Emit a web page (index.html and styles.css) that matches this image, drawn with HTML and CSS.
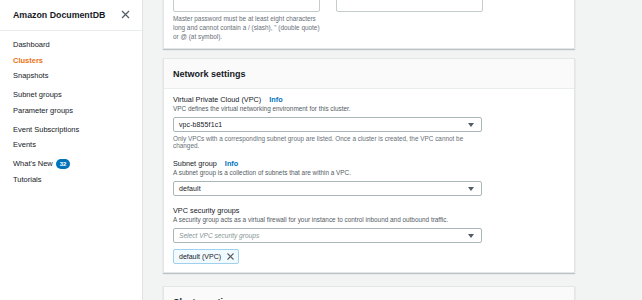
FILE: index.html
```html
<!DOCTYPE html>
<html>
<head>
<meta charset="utf-8">
<link rel="stylesheet" href="styles.css">
</head>
<body>
<div class="app">
  <aside class="sidebar">
    <div class="side-head">
      <span class="side-title">Amazon DocumentDB</span>
      <svg class="close" width="9" height="9" viewBox="0 0 9 9"><path d="M1 1L8 8M8 1L1 8" stroke="#545b64" stroke-width="1.2" fill="none"/></svg>
    </div>
    <nav class="nav">
      <div class="group">
        <div class="item">Dashboard</div>
        <div class="item active">Clusters</div>
        <div class="item">Snapshots</div>
      </div>
      <div class="group">
        <div class="item">Subnet groups</div>
        <div class="item">Parameter groups</div>
      </div>
      <div class="group">
        <div class="item">Event Subscriptions</div>
        <div class="item">Events</div>
      </div>
      <div class="group">
        <div class="item">What's New <span class="badge">32</span></div>
        <div class="item">Tutorials</div>
      </div>
    </nav>
  </aside>
  <main class="main">
    <section class="card card-top">
      <div class="pw-row">
        <div class="input"></div>
        <div class="input"></div>
      </div>
      <p class="hint pw-hint">Master password must be at least eight characters long and cannot contain a / (slash), " (double quote) or @ (at symbol).</p>
    </section>
    <section class="card card-net">
      <header class="card-head">Network settings</header>
      <div class="card-body">
        <div class="field">
          <div class="label">Virtual Private Cloud (VPC) <span class="info">Info</span></div>
          <div class="desc">VPC defines the virtual networking environment for this cluster.</div>
          <div class="select"><span class="val">vpc-b855f1c1</span><span class="caret"></span></div>
          <div class="hint">Only VPCs with a corresponding subnet group are listed. Once a cluster is created, the VPC cannot be changed.</div>
        </div>
        <div class="field">
          <div class="label">Subnet group <span class="info">Info</span></div>
          <div class="desc">A subnet group is a collection of subnets that are within a VPC.</div>
          <div class="select"><span class="val">default</span><span class="caret"></span></div>
        </div>
        <div class="field">
          <div class="label">VPC security groups</div>
          <div class="desc">A security group acts as a virtual firewall for your instance to control inbound and outbound traffic.</div>
          <div class="select"><span class="placeholder">Select VPC security groups</span><span class="caret"></span></div>
          <div class="token"><span>default (VPC)</span><svg width="7" height="7" viewBox="0 0 7 7"><path d="M0.5 0.5L6.5 6.5M6.5 0.5L0.5 6.5" stroke="#545b64" stroke-width="1.1" fill="none"/></svg></div>
        </div>
      </div>
    </section>
    <section class="card card-next">
      <header class="card-head">Cluster options</header>
    </section>
  </main>
</div>
</body>
</html>
```

FILE: styles.css
```css
* { box-sizing: border-box; }
html, body { margin: 0; padding: 0; }
body {
  width: 642px;
  height: 300px;
  overflow: hidden;
  background: #f2f3f3;
  font-family: "Liberation Sans", Arial, sans-serif;
  color: #16191f;
}
.app { display: flex; height: 300px; }
.sidebar {
  width: 143px;
  flex: none;
  background: #fff;
  border-right: 1px solid #dfe3e3;
}
.side-head {
  height: 31px;
  border-bottom: 1px solid #eaeded;
  display: flex;
  align-items: center;
  justify-content: space-between;
  padding: 0 12px 1px 13px;
}
.side-title { font-weight: bold; font-size: 8.8px; color: #16191f; }
.close { display: block; }
.nav { padding-top: 6px; padding-left: 13px; }
.group { margin-bottom: 3.5px; }
.item {
  font-size: 7.5px;
  height: 15.5px;
  line-height: 15.5px;
  color: #16191f;
  display: flex;
  align-items: center;
}
.item.active { color: #ec7211; font-weight: bold; }
.badge {
  display: inline-block;
  margin-left: 3px;
  background: #0073bb;
  color: #fff;
  font-weight: bold;
  font-size: 6px;
  line-height: 10px;
  height: 10px;
  padding: 0 4px;
  border-radius: 5px;
}
.main {
  flex: 1;
  padding: 0 67px 0 20px;
  display: flex;
  flex-direction: column;
}
.card {
  background: #fff;
  border: 1px solid #e3e6e6;
  box-shadow: 0 1px 1px rgba(0, 28, 36, 0.22);
}
.card-top {
  margin-top: -22px;
  margin-bottom: 9px;
  padding: 0 9px 7px;
}
.pw-row { display: flex; gap: 16px; }
.input {
  width: 147px;
  height: 33px;
  border: 1px solid #c6cccc;
  border-radius: 2px;
}
.hint {
  font-size: 6.4px;
  line-height: 7px;
  color: #687078;
  margin: 3px 0 0;
  max-width: 300px;
}
.pw-hint { width: 148px; line-height: 9px; margin-top: 2px; }
.card-net { margin-bottom: 13px; }
.card-head {
  height: 30px;
  background: #fafafa;
  border-bottom: 1px solid #eaeded;
  padding: 0 9px;
  display: flex;
  align-items: center;
  font-weight: bold;
  font-size: 9px;
  color: #16191f;
}
.card-body { padding: 6px 9px 8px; }
.field { margin-bottom: 10px; }
.field:last-child { margin-bottom: 0; }
.label { font-size: 7.3px; line-height: 10px; color: #16191f; }
.info { color: #0073bb; font-weight: bold; margin-left: 6px; }
.desc { font-size: 6.4px; line-height: 8px; color: #545b64; }
.select {
  margin-top: 4px;
  width: 309px;
  height: 15px;
  border: 1px solid #aab7b8;
  border-radius: 2px;
  display: flex;
  align-items: center;
  justify-content: space-between;
  padding: 0 7px 0 5px;
}
.val { font-size: 7px; color: #16191f; font-weight: 500; letter-spacing: 0.1px; }
.placeholder { font-size: 6.6px; color: #879596; font-style: italic; }
.caret {
  width: 0; height: 0;
  border-left: 3px solid transparent;
  border-right: 3px solid transparent;
  border-top: 4px solid #545b64;
}
.token {
  margin-top: 6px;
  display: inline-flex;
  align-items: center;
  gap: 6px;
  height: 15px;
  padding: 0 4px 0 5px;
  background: #f1faff;
  border: 1px solid #9fd0ee;
  border-radius: 2px;
  font-size: 7px;
  color: #16191f;
}
.token svg { display: block; }
.card-next { height: 40px; }
```
